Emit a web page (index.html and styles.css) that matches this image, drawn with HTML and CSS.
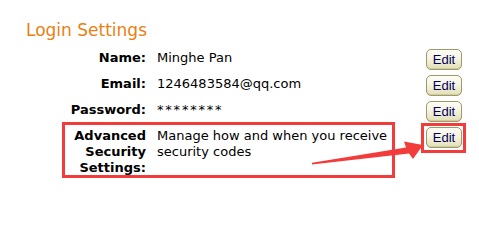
FILE: index.html
```html
<!DOCTYPE html>
<html>
<head>
<meta charset="utf-8">
<link rel="stylesheet" href="styles.css">
</head>
<body>
<div class="page">
  <h2 class="title">Login Settings</h2>
  <div class="settings">
    <div class="label">Name:</div>
    <div class="value">Minghe Pan</div>
    <button class="edit">Edit</button>

    <div class="label">Email:</div>
    <div class="value">1246483584@qq.com</div>
    <button class="edit">Edit</button>

    <div class="label">Password:</div>
    <div class="value masked">********</div>
    <button class="edit">Edit</button>

    <div class="label">Advanced Security Settings:</div>
    <div class="value">Manage how and when you receive security codes</div>
    <button class="edit">Edit</button>
  </div>
  <svg class="annot" width="479" height="203" viewBox="0 0 479 203">
    <rect x="63.5" y="123.5" width="330" height="53" fill="none" stroke="#f23b3b" stroke-width="3"/>
    <rect x="422.5" y="124.5" width="42" height="27" fill="none" stroke="#f23b3b" stroke-width="3"/>
    <polygon points="312,162.8 406,147.6 404,141.5 423,145 413,159 409,153.6 312,164.6" fill="#f23b3b"/>
  </svg>
</div>
</body>
</html>
```
FILE: styles.css
```css
html, body {
  margin: 0;
  padding: 0;
  background: #ffffff;
}
.page {
  position: relative;
  width: 479px;
  height: 203px;
  box-sizing: border-box;
  padding: 20px 0 0 26px;
  font-family: "DejaVu Sans", Verdana, sans-serif;
  font-size: 13px;
  color: #000;
}
.title {
  margin: 0 0 9px 0;
  font-size: 17px;
  line-height: 20px;
  font-weight: normal;
  color: #ea7f12;
}
.settings {
  display: grid;
  grid-template-columns: 120px 258px 36px;
  column-gap: 11px;
  row-gap: 5px;
  align-items: start;
}
.label {
  text-align: right;
  font-weight: bold;
  line-height: 16px;
  padding-top: 1px;
}
.value {
  line-height: 16px;
  padding-top: 1px;
}
.masked {
  letter-spacing: 1.8px;
}
.edit {
  width: 36px;
  height: 21px;
  margin: 0;
  padding: 0;
  border: 1px solid #9d9a6c;
  border-radius: 5px;
  background: linear-gradient(#fefef6 0%, #f6f4e2 45%, #e2deb6 100%);
  font-family: "Liberation Sans", Arial, sans-serif;
  font-size: 13px;
  line-height: 19px;
  color: #000060;
  box-shadow: inset 0 -1px 0 #cfcb9c;
}
.annot {
  position: absolute;
  left: 0;
  top: 0;
  pointer-events: none;
}
```
